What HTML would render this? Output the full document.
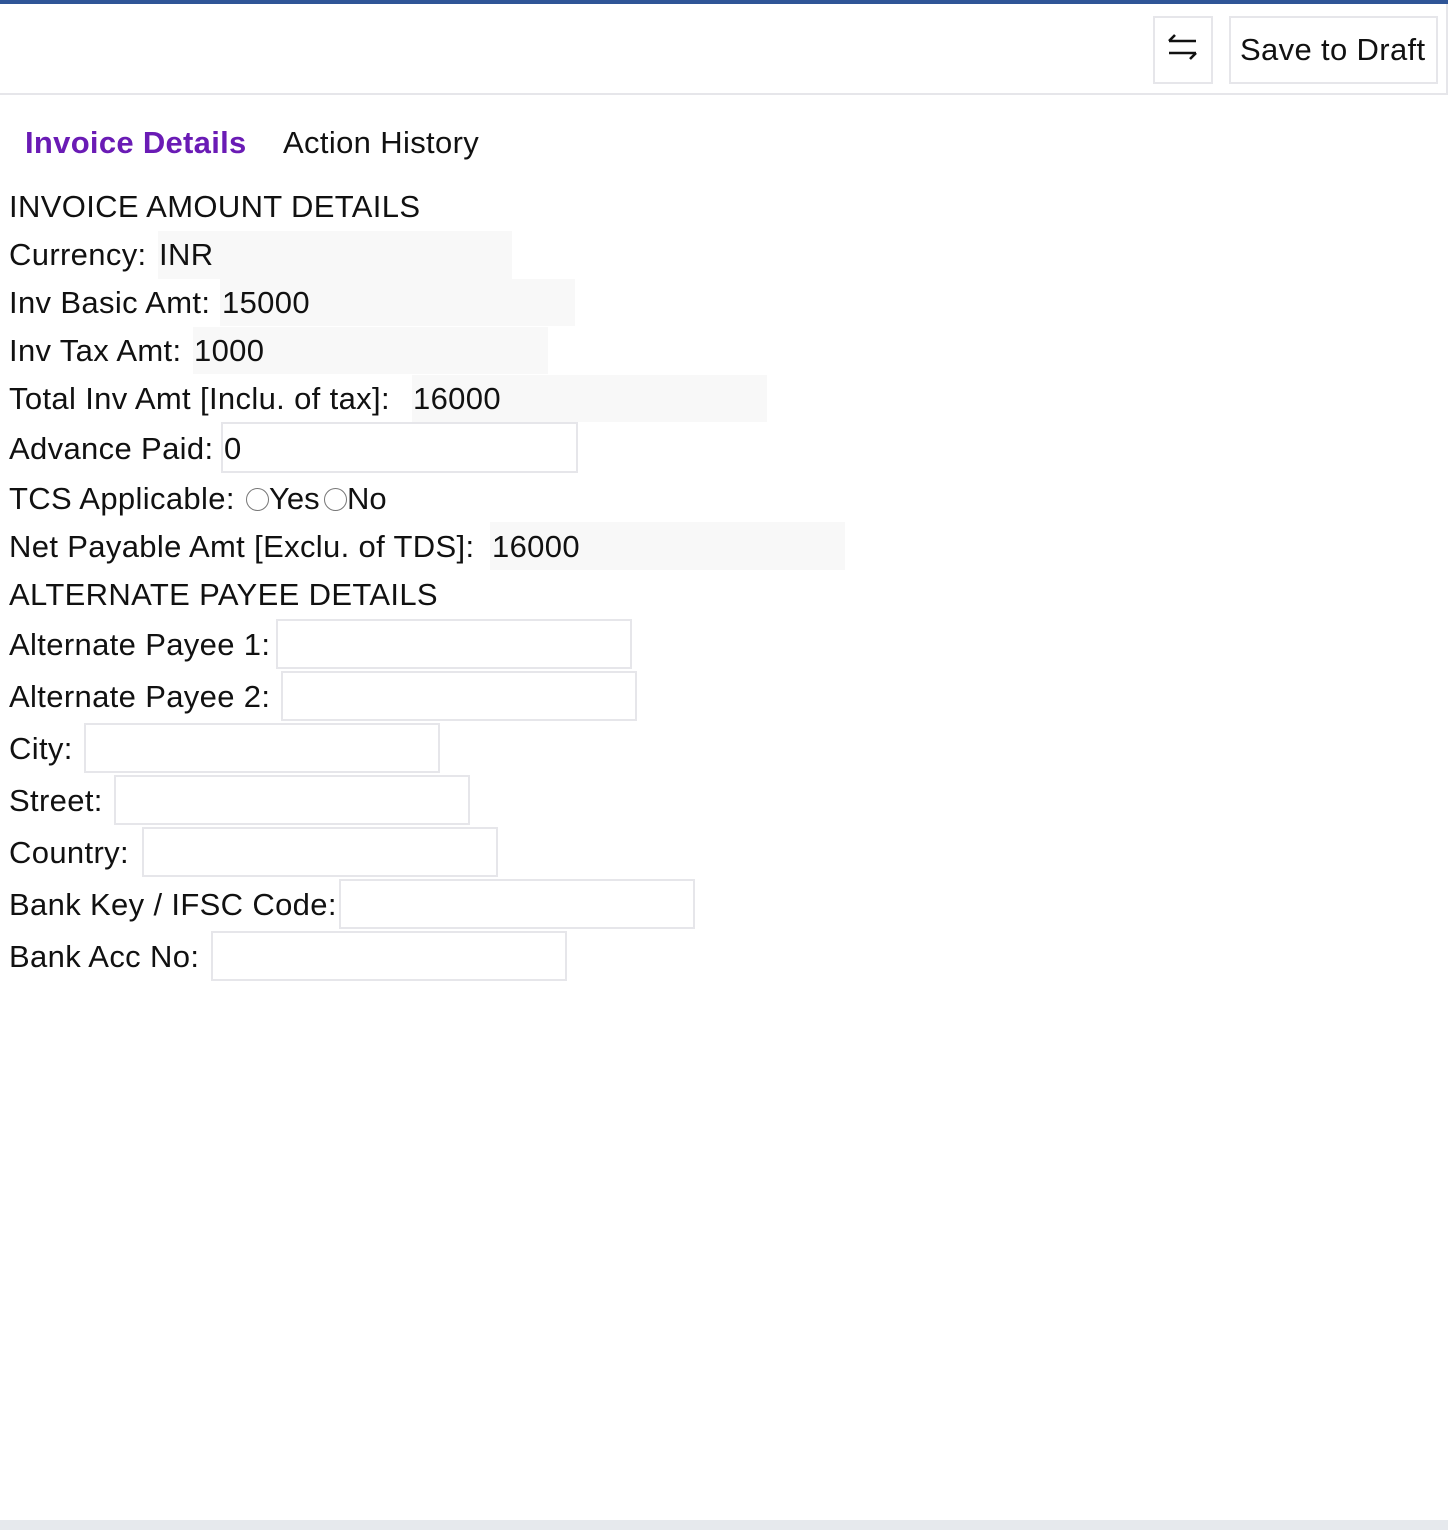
<!DOCTYPE html>
<html><head><style>
body{margin:0;width:1448px;height:1530px;position:relative;background:#fff;font-family:"Liberation Sans",sans-serif;color:#111;overflow:hidden}
.a{position:absolute}
.t{position:absolute;font-size:31px;letter-spacing:0.35px;line-height:36px;white-space:nowrap}
.g{position:absolute;background:#f8f8f8}
.i{position:absolute;border:2px solid #e6e6ea;box-sizing:border-box;background:#fff}
.r{display:inline-block;width:23px;height:23px;border:1.5px solid #777;border-radius:50%;box-sizing:border-box;vertical-align:-2px}
</style></head><body>
<div class="a" style="left:0;top:0;width:1448px;height:4px;background:#2f5597"></div>
<div class="a" style="left:0;top:4px;width:1446px;height:89px;border-right:2px solid #e6e6ea;border-bottom:2px solid #e6e6ea"></div>
<div class="i" style="left:1153px;top:16px;width:60px;height:68px"></div>
<svg class="a" style="left:1166px;top:32px" width="34" height="30" viewBox="0 0 34 30"><path d="M3 9H30M3 9L9 3M3 21H30M30 21L24 27" stroke="#111" stroke-width="2.6" fill="none"/></svg>
<div class="i" style="left:1229px;top:16px;width:209px;height:68px"></div>
<div class="t" style="left:1240px;top:32px">Save to Draft</div>
<div class="t" style="left:25px;top:125px;color:#6a1bb5;font-weight:bold;letter-spacing:0.3px">Invoice Details</div>
<div class="t" style="left:283px;top:125px">Action History</div>

<div class="g" style="left:158px;top:231px;width:354px;height:48px"></div>
<div class="g" style="left:220px;top:279px;width:355px;height:47px"></div>
<div class="g" style="left:193px;top:327px;width:355px;height:47px"></div>
<div class="g" style="left:412px;top:375px;width:355px;height:47px"></div>
<div class="g" style="left:490px;top:522px;width:355px;height:48px"></div>
<div class="i" style="left:221px;top:422px;width:357px;height:51px"></div>
<div class="i" style="left:276px;top:619px;width:356px;height:50px"></div>
<div class="i" style="left:281px;top:671px;width:356px;height:50px"></div>
<div class="i" style="left:84px;top:723px;width:356px;height:50px"></div>
<div class="i" style="left:114px;top:775px;width:356px;height:50px"></div>
<div class="i" style="left:142px;top:827px;width:356px;height:50px"></div>
<div class="i" style="left:339px;top:879px;width:356px;height:50px"></div>
<div class="i" style="left:211px;top:931px;width:356px;height:50px"></div>

<div class="t" style="left:9px;top:189px">INVOICE AMOUNT DETAILS</div>
<div class="t" style="left:9px;top:237px">Currency:</div><div class="t" style="left:159px;top:237px">INR</div>
<div class="t" style="left:9px;top:285px">Inv Basic Amt:</div><div class="t" style="left:222px;top:285px">15000</div>
<div class="t" style="left:9px;top:333px">Inv Tax Amt:</div><div class="t" style="left:194px;top:333px">1000</div>
<div class="t" style="left:9px;top:381px">Total Inv Amt [Inclu. of tax]:</div><div class="t" style="left:413px;top:381px">16000</div>
<div class="t" style="left:9px;top:431px">Advance Paid:</div><div class="t" style="left:224px;top:431px">0</div>
<div class="t" style="left:9px;top:481px">TCS Applicable: </div>
<div class="t" style="left:246px;top:481px;letter-spacing:0"><span class="r"></span>Yes</div>
<div class="t" style="left:324px;top:481px;letter-spacing:0"><span class="r"></span>No</div>
<div class="t" style="left:9px;top:529px">Net Payable Amt [Exclu. of TDS]:</div><div class="t" style="left:492px;top:529px">16000</div>
<div class="t" style="left:9px;top:577px">ALTERNATE PAYEE DETAILS</div>
<div class="t" style="left:9px;top:627px">Alternate Payee 1:</div>
<div class="t" style="left:9px;top:679px">Alternate Payee 2:</div>
<div class="t" style="left:9px;top:731px">City:</div>
<div class="t" style="left:9px;top:783px">Street:</div>
<div class="t" style="left:9px;top:835px">Country:</div>
<div class="t" style="left:9px;top:887px">Bank Key / IFSC Code:</div>
<div class="t" style="left:9px;top:939px">Bank Acc No:</div>
<div class="a" style="left:0;top:1520px;width:1448px;height:10px;background:#e6e9ed"></div>
</body></html>
